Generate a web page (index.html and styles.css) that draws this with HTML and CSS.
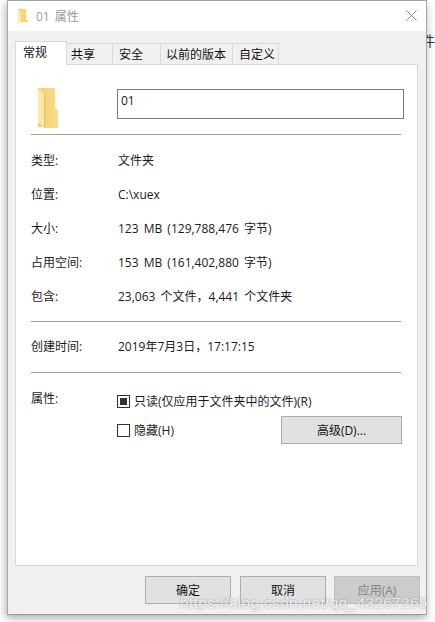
FILE: index.html
```html
<!DOCTYPE html>
<html lang="zh-CN">
<head>
<meta charset="utf-8">
<title>01 属性</title>
<link rel="stylesheet" href="styles.css">
</head>
<body>
<div class="window">
  <header class="titlebar">
    <svg class="title-icon" width="10" height="16" viewBox="0 0 10 16"><path d="M0 1h8v11h2v2H3v1H2l-2-2z" fill="#f7d675"/><path d="M0 1l3 3v11l-3-3z" fill="#ffe9a3"/></svg>
    <span class="title-text">01 属性</span>
    <svg class="close" width="11" height="11" viewBox="0 0 11 11"><path d="M.5.5l10 10M10.5.5l-10 10" stroke="#8a8a8a" stroke-width="1" fill="none"/></svg>
  </header>
  <div class="body">
    <nav class="tabs">
      <span class="tab tab-active">常规</span>
      <span class="tab t2">共享</span>
      <span class="tab t3">安全</span>
      <span class="tab t4">以前的版本</span>
      <span class="tab t5">自定义</span>
    </nav>
    <main class="panel">
      <div class="head-row">
        <svg class="folder" width="24" height="42" viewBox="0 0 24 42">
          <defs><linearGradient id="g" x1="0" x2="1" y1="0" y2="0"><stop offset="0" stop-color="#f0cd73"/><stop offset="1" stop-color="#f9dd8a"/></linearGradient></defs>
          <path d="M1 1h17v21h3v19H7v-1H1z" fill="url(#g)"/>
          <path d="M1 1l6 6v34l-2-1-1-2-3-3z" fill="#ffe8a2"/>
          <path d="M7 7v33h1V8z" fill="#e9c066"/>
        </svg>
        <div class="name-box">01</div>
      </div>
      <hr class="sep">
      <dl class="rows">
        <div class="row"><dt>类型:</dt><dd>文件夹</dd></div>
        <div class="row"><dt>位置:</dt><dd>C:\xuex</dd></div>
        <div class="row"><dt>大小:</dt><dd>123 MB (129,788,476 字节)</dd></div>
        <div class="row"><dt>占用空间:</dt><dd>153 MB (161,402,880 字节)</dd></div>
        <div class="row"><dt>包含:</dt><dd>23,063 个文件，4,441 个文件夹</dd></div>
      </dl>
      <hr class="sep sep2">
      <dl class="rows-single">
        <div class="row created"><dt>创建时间:</dt><dd>2019年7月3日，17:17:15</dd></div>
      </dl>
      <hr class="sep">
      <div class="attrs">
        <span class="attr-label">属性:</span>
        <div class="attr-main">
          <div class="check-row"><span class="check check-mixed"></span><span>只读(仅应用于文件夹中的文件)(R)</span></div>
          <div class="check-row second">
            <span class="check"></span><span>隐藏(H)</span>
            <span class="btn adv">高级(D)...</span>
          </div>
        </div>
      </div>
    </main>
    <footer class="actions">
      <span class="btn ok">确定</span>
      <span class="btn">取消</span>
      <span class="btn disabled">应用(A)</span>
    </footer>
  </div>
</div>
<span class="side-glyph">件</span>
<span class="watermark">https://blog.csdn.net/qq_43267265</span>
</body>
</html>
```
FILE: styles.css
```css
* { box-sizing: border-box; }
html, body { margin: 0; padding: 0; }
body {
  width: 435px;
  height: 622px;
  overflow: hidden;
  position: relative;
  background: #fff;
  font-family: "Open Sans", "Noto Sans CJK SC", sans-serif;
  font-size: 12px;
  word-spacing: 2px;
  color: #1a1a1a;
}
.window {
  margin-left: 7px;
  width: 420px;
  height: 615px;
  border: 1px solid #a3a3a3;
  border-left-color: #a8a8a8;
  border-bottom-color: #9a9a9a;
  box-shadow: -3px 3px 7px rgba(0,0,0,.22), 3px 5px 7px rgba(0,0,0,.1);
  background: #f0f0f0;
  display: flex;
  flex-direction: column;
}
.titlebar {
  height: 30px;
  background: #fff;
  display: flex;
  align-items: center;
  padding: 0 9px 1px 10px;
  flex: none;
}
.title-text { margin-left: 8px; color: #9a9a9a; font-size: 12px; }
.close { margin-left: auto; }
.body { flex: 1; padding: 11px 9px 0 7px; display: flex; flex-direction: column; }
.tabs { display: flex; height: 23px; align-items: flex-end; position: relative; z-index: 1; margin-bottom: -1px; }
.tab {
  height: 22px;
  margin-left: -1px;
  display: flex;
  align-items: center;
  background: #f0f0f0;
  border: 1px solid #d9d9d9;
  color: #111;
  padding-left: 4px;
}
.tab:first-child { margin-left: 0; }
.tab-active {
  width: 52px;
  height: 24px;
  background: #fff;
  border-bottom: none;
  padding: 0 0 3px 7px;
  position: relative;
  z-index: 1;
}
.t2 { width: 47px; }
.t3 { width: 49px; padding-left: 6px; }
.t4 { width: 73px; padding-left: 5px; }
.t5 { width: 47px; padding-left: 6px; }
.panel {
  width: 403px;
  height: 502px;
  background: #fff;
  border: 1px solid #d9d9d9;
  padding: 0 15px;
  flex: none;
}
.head-row { display: flex; align-items: flex-start; height: 69px; padding-top: 24px; }
.folder { margin-left: 6px; margin-top: -2px; flex: none; }
.name-box {
  margin-left: 56px;
  width: 287px;
  height: 30px;
  border: 1px solid #7a7a7a;
  padding: 0 3px;
  line-height: 21px;
  flex: none;
}
.sep { margin: 0; border: 0; height: 1px; background: #a0a0a0; width: 370px; }
.rows { margin: 0; padding-top: 8px; }
.rows-single { margin: 0; }
.row { display: flex; height: 34px; align-items: center; margin: 0; }
.row dt { width: 87px; flex: none; }
.row dd { margin: 0; }
.sep2 { margin-top: 8px; }
.created { height: 50px; padding-bottom: 2px; }
.attrs { display: flex; padding-top: 9px; }
.attr-label { width: 86px; flex: none; line-height: 34px; height: 34px; }
.attr-main { width: 285px; padding-top: 10px; flex: none; }
.check-row { display: flex; align-items: center; gap: 4px; height: 18px; }
.second { margin-top: 11px; }
.check {
  width: 13px;
  height: 13px;
  border: 1px solid #333;
  background: #fff;
  flex: none;
  display: flex;
  align-items: center;
  justify-content: center;
}
.check-mixed::before { content: ""; width: 7px; height: 7px; background: #333; }
.btn {
  width: 86px;
  height: 28px;
  background: #e1e1e1;
  border: 1px solid #adadad;
  display: flex;
  align-items: center;
  justify-content: center;
  color: #111;
  flex: none;
}
.adv { width: 121px; margin-left: auto; }
.actions { display: flex; gap: 8px; justify-content: flex-end; padding-top: 10px; margin-right: -3px; }
.ok { margin-right: 1px; }
.disabled { background: #ccc; border-color: #bfbfbf; color: #838383; }
.side-glyph { position: absolute; left: 421px; top: 30px; font-size: 14px; color: #333; z-index: -1; }
.watermark {
  position: absolute;
  left: 180px;
  top: 594px;
  font-family: "Liberation Sans", sans-serif;
  font-size: 15.5px;
  letter-spacing: .3px;
  word-spacing: 0;
  color: rgba(255,255,255,.8);
  text-shadow: 0 0 2px rgba(90,90,90,.6);
  white-space: nowrap;
}
```
